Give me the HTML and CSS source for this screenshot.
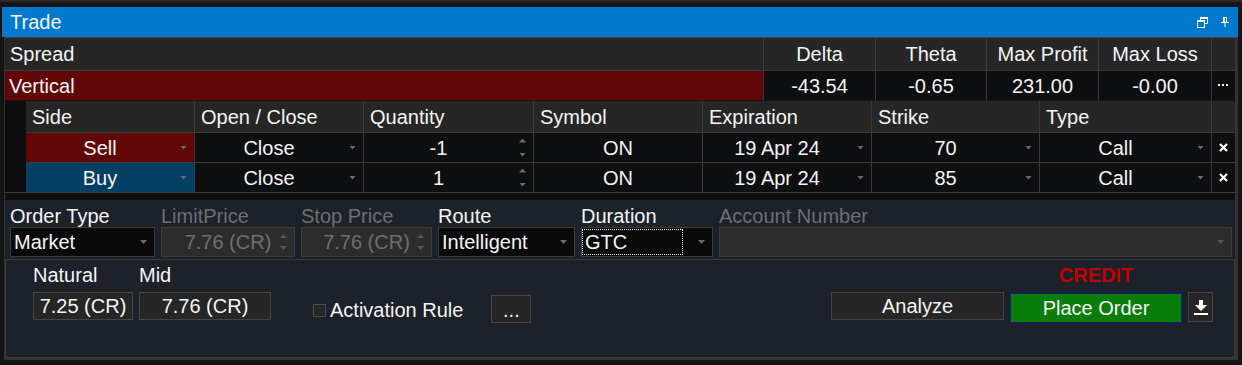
FILE: index.html
```html
<!DOCTYPE html>
<html lang="en">
<head>
    <meta charset="UTF-8">
    <title>Trade</title>
    <link rel="stylesheet" href="styles.css">
</head>
<body>
    <div class="window">
        <div class="titlebar">
            <span class="title">Trade</span>
            <span class="tb-icons">
                <svg width="11" height="11" viewBox="0 0 11 11">
                    <path d="M3.5 3V.5h7v6H8" fill="none" stroke="#fff"/>
                    <rect x="3" y="0" width="8" height="2" fill="#fff"/>
                    <rect x=".5" y="3.5" width="7" height="7" fill="none" stroke="#fff"/>
                    <rect x="0" y="3" width="8" height="2" fill="#fff"/>
                </svg>
                <svg width="8" height="10" viewBox="0 0 8 10">
                    <path d="M2.5 .5h3v5h-3z" fill="none" stroke="#fff"/>
                    <rect x="2" y="0" width="2" height="6" fill="#fff"/>
                    <rect x="0" y="5" width="8" height="1" fill="#fff"/>
                    <rect x="3.5" y="6" width="1" height="4" fill="#fff"/>
                </svg>
            </span>
        </div>
        <div class="frame">
            <div class="summary">
                <div class="hd spread">Spread</div>
                <div class="hd c">Delta</div>
                <div class="hd c">Theta</div>
                <div class="hd c">Max Profit</div>
                <div class="hd c">Max Loss</div>
                <div class="hd"></div>
                <div class="vertical">Vertical</div>
                <div class="num">-43.54</div>
                <div class="num">-0.65</div>
                <div class="num">231.00</div>
                <div class="num">-0.00</div>
                <div class="num">
                    <svg width="11" height="3" viewBox="0 0 11 3">
                        <rect x="0" y="0" width="2" height="2" fill="#fff"/>
                        <rect x="4" y="0" width="2" height="2" fill="#fff"/>
                        <rect x="8" y="0" width="2" height="2" fill="#fff"/>
                    </svg>
                </div>
            </div>

            <div class="legs">
                <div class="strip"></div>
                <div class="leg-grid">
                    <div class="lh">Side</div>
                    <div class="lh">Open / Close</div>
                    <div class="lh">Quantity</div>
                    <div class="lh">Symbol</div>
                    <div class="lh">Expiration</div>
                    <div class="lh">Strike</div>
                    <div class="lh">Type</div>
                    <div class="lh"></div>

                    <div class="lc sell"><span class="v">Sell</span><span class="arrow"></span></div>
                    <div class="lc"><span class="v">Close</span><span class="arrow"></span></div>
                    <div class="lc"><span class="v">-1</span><span class="spin"><i class="up"></i><i class="down"></i></span></div>
                    <div class="lc"><span class="v plain">ON</span></div>
                    <div class="lc"><span class="v">19 Apr 24</span><span class="arrow"></span></div>
                    <div class="lc"><span class="v">70</span><span class="arrow"></span></div>
                    <div class="lc"><span class="v">Call</span><span class="arrow"></span></div>
                    <div class="lc del">
                        <svg width="9" height="9" viewBox="0 0 9 9"><path d="M1 1l7 7M8 1L1 8" stroke="#fff" stroke-width="2.2"/></svg>
                    </div>

                    <div class="lc buy"><span class="v">Buy</span><span class="arrow"></span></div>
                    <div class="lc"><span class="v">Close</span><span class="arrow"></span></div>
                    <div class="lc"><span class="v">1</span><span class="spin"><i class="up"></i><i class="down"></i></span></div>
                    <div class="lc"><span class="v plain">ON</span></div>
                    <div class="lc"><span class="v">19 Apr 24</span><span class="arrow"></span></div>
                    <div class="lc"><span class="v">85</span><span class="arrow"></span></div>
                    <div class="lc"><span class="v">Call</span><span class="arrow"></span></div>
                    <div class="lc del">
                        <svg width="9" height="9" viewBox="0 0 9 9"><path d="M1 1l7 7M8 1L1 8" stroke="#fff" stroke-width="2.2"/></svg>
                    </div>
                </div>
            </div>

            <div class="band"></div>

            <div class="order">
                <div class="field f-type">
                    <div class="lbl">Order Type</div>
                    <div class="box select"><span class="txt">Market</span><span class="arrow"></span></div>
                </div>
                <div class="field f-limit">
                    <div class="lbl off">LimitPrice</div>
                    <div class="box num-box disabled"><span class="txt">7.76 (CR)</span><span class="spin"><i class="up"></i><i class="down"></i></span></div>
                </div>
                <div class="field f-stop">
                    <div class="lbl off">Stop Price</div>
                    <div class="box num-box disabled"><span class="txt">7.76 (CR)</span><span class="spin"><i class="up"></i><i class="down"></i></span></div>
                </div>
                <div class="field f-route">
                    <div class="lbl">Route</div>
                    <div class="box select"><span class="txt">Intelligent</span><span class="arrow"></span></div>
                </div>
                <div class="field f-dur">
                    <div class="lbl">Duration</div>
                    <div class="box select"><span class="txt focus">GTC</span><span class="arrow"></span></div>
                </div>
                <div class="field f-acct">
                    <div class="lbl off">Account Number</div>
                    <div class="box select disabled"><span class="txt"></span><span class="arrow"></span></div>
                </div>
            </div>

            <div class="panel">
                <div class="pf natural">
                    <div class="lbl">Natural</div>
                    <div class="pbox">7.25 (CR)</div>
                </div>
                <div class="pf mid">
                    <div class="lbl">Mid</div>
                    <div class="pbox">7.76 (CR)</div>
                </div>
                <div class="activation">
                    <span class="check"></span>
                    <span>Activation Rule</span>
                </div>
                <div class="btn dots">...</div>

                <div class="actions">
                    <div class="btn analyze">Analyze</div>
                    <div class="place-col">
                        <div class="credit">CREDIT</div>
                        <div class="btn place">Place Order</div>
                    </div>
                    <div class="btn download">
                        <svg width="14" height="15" viewBox="0 0 14 15">
                            <path d="M5 0h4v5h4l-6 6-6-6h4z" fill="#fff"/>
                            <rect x="0" y="13" width="14" height="2" fill="#fff"/>
                        </svg>
                    </div>
                </div>
            </div>
        </div>
    </div>
</body>
</html>
```

FILE: styles.css
```css
* {
    margin: 0;
    padding: 0;
    box-sizing: border-box;
}

body {
    background: #151515;
    color: #f4f4f4;
    font-family: 'Liberation Sans', Arial, sans-serif;
    font-size: 20px;
    line-height: 22px;
    border-top: 2px solid #2a2a2a;
}

.window {
    margin: 5px 0 0 2px;
    width: 1236px;
}

/* Title bar */
.titlebar {
    height: 30px;
    background: #0079cc;
    display: flex;
    align-items: center;
    justify-content: space-between;
    padding: 0 9px 0 8px;
}

.tb-icons {
    display: flex;
    align-items: center;
    gap: 13px;
}

.tb-icons svg {
    display: block;
}

.frame {
    margin-left: 2px;
    border-top: 1px solid #444;
    border-left: 1px solid #303030;
    border-right: 3px solid #333;
    border-bottom: 2px solid #333;
}

/* Spread summary */
.summary {
    display: grid;
    grid-template-columns: 758px 111px 110px 111px 112px 23px;
    grid-template-rows: 32px 29px;
    gap: 1px;
    background: #3a3a3a;
}

.hd {
    background: #262626;
    display: flex;
    align-items: center;
    padding-left: 5px;
}

.hd.c {
    justify-content: center;
    padding-left: 0;
}

.vertical {
    background: #620707;
    display: flex;
    align-items: center;
    padding-left: 4px;
}

.num {
    background: #0e0f11;
    display: flex;
    align-items: center;
    justify-content: center;
}

/* Legs */
.legs {
    display: flex;
    border-top: 1px solid #141414;
    border-bottom: 1px solid #3a3a3a;
}

.strip {
    width: 21px;
    background: #0d0d0f;
}

.leg-grid {
    display: grid;
    grid-template-columns: 168px 168px 169px 168px 168px 167px 171px 23px;
    grid-template-rows: 31px 29px 29px;
    gap: 1px;
    background: #3a3a3a;
}

.lh {
    background: #262626;
    display: flex;
    align-items: center;
    padding-left: 6px;
}

.lc {
    background: #0e0f11;
    display: flex;
    align-items: center;
    padding-right: 7px;
}

.lc.sell {
    background: #620707;
}

.lc.buy {
    background: #053f63;
}

.lc .v {
    flex: 1;
    text-align: center;
}

.lc .v.plain {
    margin-right: -7px;
}

.lc.del {
    justify-content: center;
    padding-right: 0;
}

.lc.del svg {
    display: block;
}

.arrow {
    width: 7px;
    height: 4px;
    margin-left: 6px;
    background: #6b6b6b;
    clip-path: polygon(0 0, 100% 0, 50% 100%);
}

.spin {
    display: flex;
    flex-direction: column;
    justify-content: space-between;
    height: 18px;
    margin-left: 6px;
}

.spin i {
    display: block;
    width: 7px;
    height: 4px;
    background: #6b6b6b;
}

.spin .up {
    clip-path: polygon(50% 0, 100% 100%, 0 100%);
}

.spin .down {
    clip-path: polygon(0 0, 100% 0, 50% 100%);
}

.band {
    height: 7px;
    background: #0f1012;
}

/* Order settings */
.order {
    display: flex;
    gap: 6px;
    height: 59px;
    padding: 5px 3px 0 5px;
    background: #1d212a;
}

.field {
    display: flex;
    flex-direction: column;
}

.f-type { width: 145px; }
.f-limit { width: 134px; }
.f-stop { width: 131px; }
.f-route { width: 137px; }
.f-dur { width: 132px; }
.f-acct { flex: 1; }

.lbl {
    height: 22px;
    white-space: nowrap;
}

.lbl.off {
    color: #6e6e6e;
}

.box {
    height: 30px;
    border: 1px solid #3c3c3c;
    background: #0a0a0b;
    display: flex;
    align-items: center;
    padding-right: 7px;
}

.box .txt {
    flex: 1;
    padding-left: 3px;
    white-space: nowrap;
}

.box.disabled {
    background: #2c2c2c;
    color: #6e6e6e;
}

.box.disabled .arrow,
.box.disabled .spin i {
    background: #555;
}

.num-box .txt {
    text-align: center;
    padding-left: 14px;
}

.num-box .spin {
    height: 16px;
    margin-left: 0;
}

.box .txt.focus {
    align-self: stretch;
    margin: 1px 9px 1px 0;
    outline: 1px dotted #fff;
    outline-offset: -1px;
    display: flex;
    align-items: center;
}

/* Bottom panel */
.panel {
    display: flex;
    align-items: flex-start;
    height: 99px;
    padding: 4px 21px 0 27px;
    border: 1px solid #3c3c3c;
    background: #1d212a;
}

.pf {
    display: flex;
    flex-direction: column;
}

.pf.natural { width: 100px; }

.pf.mid {
    width: 132px;
    margin-left: 6px;
}

.pbox {
    margin-top: 6px;
    height: 28px;
    border: 1px solid #444;
    background: #262626;
    display: flex;
    align-items: center;
    justify-content: center;
}

.activation {
    display: flex;
    align-items: center;
    margin: 35px 0 0 42px;
    height: 22px;
}

.check {
    width: 13px;
    height: 13px;
    border: 1px solid #4a4a4a;
    background: #262626;
    margin-right: 4px;
}

.btn {
    border: 1px solid #444;
    background: #262626;
    display: flex;
    align-items: center;
    justify-content: center;
}

.btn.dots {
    width: 40px;
    height: 28px;
    margin: 31px 0 0 28px;
    padding-top: 2px;
}

.actions {
    margin-left: auto;
    display: flex;
    align-items: flex-start;
    gap: 6px;
}

.btn.analyze {
    width: 173px;
    height: 28px;
    margin-top: 28px;
}

.place-col {
    display: flex;
    flex-direction: column;
    align-items: center;
}

.credit {
    color: #c00000;
    font-weight: bold;
    height: 22px;
}

.btn.place {
    width: 172px;
    height: 30px;
    margin-top: 7px;
    background: #0b7d0b;
    border-color: #0c1f8c;
}

.btn.download {
    width: 25px;
    height: 30px;
    margin-top: 28px;
}

.btn.download svg {
    display: block;
}
```
